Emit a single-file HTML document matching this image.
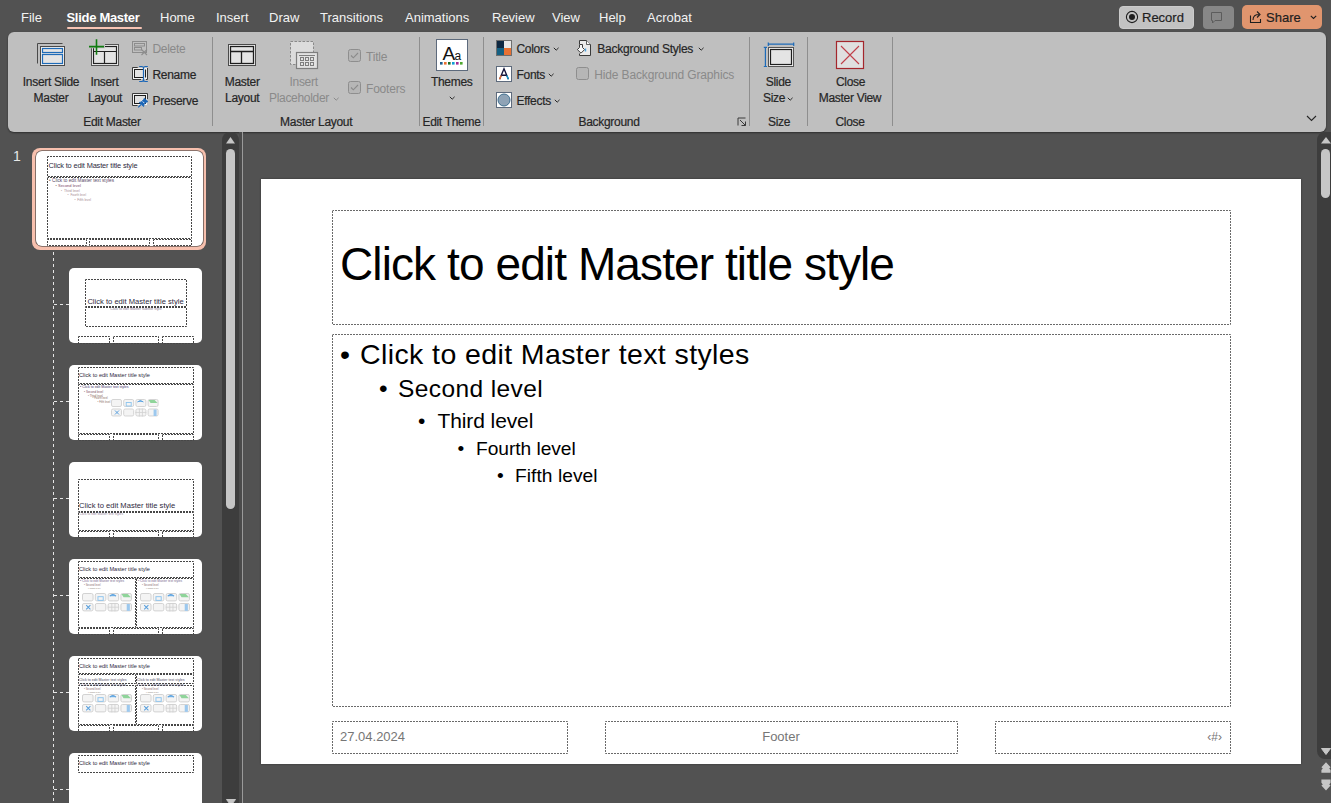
<!DOCTYPE html><html><head><meta charset="utf-8"><style>
html,body{margin:0;padding:0;}
body{width:1331px;height:803px;overflow:hidden;position:relative;background:#525252;font-family:"Liberation Sans",sans-serif;}
.t{position:absolute;white-space:nowrap;line-height:1;}
.u{-webkit-text-stroke:0.2px currentColor;}
svg{overflow:visible}
</style></head><body>
<div class="t" style="left:21px;top:10.90px;font-size:13px;color:#f2f2f2;">File</div>
<div class="t" style="left:66.5px;top:10.90px;font-size:13px;color:#ffffff;font-weight:700;letter-spacing:-0.3px;">Slide Master</div>
<div class="t" style="left:160px;top:10.90px;font-size:13px;color:#f2f2f2;">Home</div>
<div class="t" style="left:216px;top:10.90px;font-size:13px;color:#f2f2f2;">Insert</div>
<div class="t" style="left:269px;top:10.90px;font-size:13px;color:#f2f2f2;">Draw</div>
<div class="t" style="left:320px;top:10.90px;font-size:13px;color:#f2f2f2;">Transitions</div>
<div class="t" style="left:405px;top:10.90px;font-size:13px;color:#f2f2f2;">Animations</div>
<div class="t" style="left:492px;top:10.90px;font-size:13px;color:#f2f2f2;">Review</div>
<div class="t" style="left:552px;top:10.90px;font-size:13px;color:#f2f2f2;">View</div>
<div class="t" style="left:599px;top:10.90px;font-size:13px;color:#f2f2f2;">Help</div>
<div class="t" style="left:647px;top:10.90px;font-size:13px;color:#f2f2f2;">Acrobat</div>
<div style="position:absolute;left:67px;top:27px;width:75px;height:2px;background:#f8c4b4;border-radius:1px;"></div>
<div style="position:absolute;left:1118.5px;top:5.5px;width:75px;height:23px;background:#c2c2c2;border-radius:4px;box-sizing:border-box;border:1px solid #cbcbcb;"></div>
<svg style="position:absolute;left:1125px;top:10px;" width="14" height="14" viewBox="0 0 14 14"><circle cx="7" cy="7" r="5.6" fill="none" stroke="#1e1e1e" stroke-width="1.1"/><circle cx="7" cy="7" r="3" fill="#1e1e1e"/></svg>
<div class="t u" style="left:1142px;top:10.70px;font-size:13px;color:#1e1e1e;">Record</div>
<div style="position:absolute;left:1202.5px;top:5.5px;width:31px;height:23px;background:#878787;border-radius:4px;"></div>
<svg style="position:absolute;left:1210px;top:11px;" width="14" height="12" viewBox="0 0 14 12"><path d="M1.5 1.5 H11.5 V9.5 H5 L2.5 12 V9.5 H1.5 Z" fill="none" stroke="#5c5c5c" stroke-width="1"/></svg>
<div style="position:absolute;left:1242px;top:5px;width:80px;height:24px;background:#e0956e;border-radius:5px;"></div>
<svg style="position:absolute;left:1249px;top:10px;" width="14" height="14" viewBox="0 0 14 14"><path d="M1.5 5.5 V12.5 H11.5 V9" fill="none" stroke="#1e1e1e" stroke-width="1.1"/><path d="M4 10 C4 6 6.5 4.5 10 4.5 M8 1.5 L11 4.5 L8 7.5" fill="none" stroke="#1e1e1e" stroke-width="1.1"/></svg>
<div class="t u" style="left:1266px;top:10.60px;font-size:13px;color:#1e1e1e;">Share</div>
<svg style="position:absolute;left:1310px;top:15px;" width="7" height="5" viewBox="0 0 7 5"><path d="M0.8 0.8 L3.5 3.5 L6.2 0.8" fill="none" stroke="#1e1e1e" stroke-width="1.1"/></svg>
<div style="position:absolute;left:8px;top:32px;width:1318px;height:100px;background:#bfbfbf;border-radius:6px;box-shadow:0 1px 2px rgba(0,0,0,0.45);"></div>
<div style="position:absolute;left:212px;top:37px;width:1px;height:89px;background:#8e8e8e;"></div>
<div style="position:absolute;left:419px;top:37px;width:1px;height:89px;background:#8e8e8e;"></div>
<div style="position:absolute;left:483px;top:37px;width:1px;height:89px;background:#8e8e8e;"></div>
<div style="position:absolute;left:749px;top:37px;width:1px;height:89px;background:#8e8e8e;"></div>
<div style="position:absolute;left:807px;top:37px;width:1px;height:89px;background:#8e8e8e;"></div>
<div style="position:absolute;left:892px;top:37px;width:1px;height:89px;background:#8e8e8e;"></div>
<svg style="position:absolute;left:36px;top:42px;" width="30" height="26" viewBox="0 0 30 26">
<path d="M1.5 21.5 V1.5 H26.5" fill="none" stroke="#4a4a4a" stroke-width="1"/>
<rect x="4.5" y="4.5" width="24" height="19" fill="#f3f3f3" stroke="#4a4a4a" stroke-width="1"/>
<rect x="6" y="6" width="21" height="16" fill="#e4e4e4"/>
<rect x="6.5" y="6.5" width="20" height="4" fill="#e4e4e4" stroke="#1e6bb8" stroke-width="1.2"/>
<rect x="6.5" y="12.5" width="20" height="9" fill="#e4e4e4" stroke="#1e6bb8" stroke-width="1.2"/>
</svg>
<div class="t u" style="left:-149px;width:400px;text-align:center;top:75.74px;font-size:12px;color:#262626;letter-spacing:-0.3px;">Insert Slide</div>
<div class="t u" style="left:-149px;width:400px;text-align:center;top:91.64px;font-size:12px;color:#262626;letter-spacing:-0.3px;">Master</div>
<svg style="position:absolute;left:88px;top:38px;" width="32" height="30" viewBox="0 0 32 30">
<rect x="3.5" y="6.5" width="27" height="21" fill="#f3f3f3" stroke="#555" stroke-width="1"/>
<rect x="5.5" y="8.5" width="23" height="17" fill="#e4e4e4" stroke="#222" stroke-width="1.2"/>
<path d="M5.5 13.5 H28.5 M16.5 13.5 V25.5" stroke="#222" stroke-width="1.2"/>
<rect x="0" y="0" width="17" height="10.3" fill="#bfbfbf"/>
<path d="M1 8.6 H16 M8.5 1.2 V16.8" stroke="#107c10" stroke-width="1.6"/>
</svg>
<div class="t u" style="left:-95.5px;width:400px;text-align:center;top:75.74px;font-size:12px;color:#262626;letter-spacing:-0.3px;">Insert</div>
<div class="t u" style="left:-95px;width:400px;text-align:center;top:91.64px;font-size:12px;color:#262626;letter-spacing:-0.3px;">Layout</div>
<svg style="position:absolute;left:131px;top:40px;" width="18" height="16" viewBox="0 0 18 16">
<rect x="1.5" y="1.5" width="14" height="11" fill="none" stroke="#8d8d8d" stroke-width="1"/>
<rect x="3.5" y="3.5" width="10" height="2.5" fill="none" stroke="#8d8d8d" stroke-width="1"/>
<rect x="3.5" y="7.5" width="7" height="2.5" fill="none" stroke="#8d8d8d" stroke-width="1"/>
<path d="M10.5 9.5 L16 15 M16 9.5 L10.5 15" stroke="#8d8d8d" stroke-width="1.1"/>
</svg>
<div class="t" style="left:152.5px;top:42.64px;font-size:12px;color:#8a8a8a;letter-spacing:-0.3px;">Delete</div>
<svg style="position:absolute;left:130px;top:63px;" width="20" height="20" viewBox="0 0 20 20">
<rect x="3" y="5" width="14" height="11" fill="#f2f2f2"/>
<path d="M7.7 4.5 H2.5 V16.5 H11" fill="none" stroke="#3a3a3a" stroke-width="1"/>
<path d="M17.5 5 V16.5 H16" fill="none" stroke="#3a3a3a" stroke-width="1"/>
<rect x="4.5" y="6.5" width="9" height="8" fill="#e2e2e2" stroke="#1e1e1e" stroke-width="1"/>
<path d="M15.5 6.5 V14.5" stroke="#1e1e1e" stroke-width="1.1"/>
<path d="M9.2 3.5 H12 Q13.5 3.5 13.5 5.5 V16.5 Q13.5 18.5 12 18.5 H9.2 M17.8 3.5 H15 Q13.5 3.5 13.5 5.5 M13.5 16.5 Q13.5 18.5 15 18.5 H17.8" fill="none" stroke="#1a66b8" stroke-width="1.2"/>
</svg>
<div class="t u" style="left:152.5px;top:68.64px;font-size:12px;color:#262626;letter-spacing:-0.3px;">Rename</div>
<svg style="position:absolute;left:130px;top:91px;" width="20" height="20" viewBox="0 0 20 20">
<rect x="3" y="3" width="14" height="11" fill="#f2f2f2"/>
<path d="M7.5 14.5 H2.5 V2.5 H17.5 V8" fill="none" stroke="#3a3a3a" stroke-width="1"/>
<rect x="4.5" y="4.5" width="11" height="8" fill="#e2e2e2" stroke="#1e1e1e" stroke-width="1"/>
<path d="M14.3 7.2 L17.9 10.6 L16.3 11.2 L14 13.6 L13.6 15.6 L9.2 11.4 L11.2 11 L13.6 8.6 Z" fill="#1a66b8" stroke="#1a66b8" stroke-width="0.8" stroke-linejoin="round"/>
<path d="M12.6 10.4 L14.4 12.2" stroke="#e8f0fa" stroke-width="0.9"/>
<path d="M11 13.5 L8.2 16.4" stroke="#1a66b8" stroke-width="1.3"/>
</svg>
<div class="t u" style="left:152.5px;top:94.54px;font-size:12px;color:#262626;letter-spacing:-0.3px;">Preserve</div>
<div class="t u" style="left:-88px;width:400px;text-align:center;top:115.54px;font-size:12px;color:#262626;letter-spacing:-0.3px;">Edit Master</div>
<svg style="position:absolute;left:227px;top:43px;" width="30" height="24" viewBox="0 0 30 24">
<rect x="1.5" y="1.5" width="27" height="21" fill="#f5f5f5" stroke="#4a4a4a" stroke-width="1"/>
<rect x="3.5" y="3.5" width="23" height="17" fill="#e4e4e4" stroke="#1e1e1e" stroke-width="1.3"/>
<path d="M3.5 8.5 H26.5 M14.5 8.5 V20.5" stroke="#1e1e1e" stroke-width="1.3"/>
</svg>
<div class="t u" style="left:42.19999999999999px;width:400px;text-align:center;top:75.74px;font-size:12px;color:#262626;letter-spacing:-0.3px;">Master</div>
<div class="t u" style="left:42.19999999999999px;width:400px;text-align:center;top:91.64px;font-size:12px;color:#262626;letter-spacing:-0.3px;">Layout</div>
<svg style="position:absolute;left:289px;top:40px;" width="31" height="31" viewBox="0 0 31 31">
<rect x="1.5" y="1.5" width="23" height="23" fill="#dcdcdc" stroke="#8a8a8a" stroke-width="1" stroke-dasharray="2.5 1.5"/>
<rect x="7.5" y="12.5" width="21" height="16" fill="#e2e2e2" stroke="#7e7e7e" stroke-width="1.2"/>
<path d="M10 15.5 H26" stroke="#7e7e7e" stroke-width="1"/>
<g fill="none" stroke="#7e7e7e" stroke-width="1">
<rect x="11.5" y="17.5" width="3" height="3"/><rect x="16.5" y="17.5" width="3" height="3"/><rect x="21.5" y="17.5" width="3" height="3"/>
<rect x="11.5" y="22.5" width="3" height="3"/><rect x="16.5" y="22.5" width="3" height="3"/><rect x="21.5" y="22.5" width="3" height="3"/>
</g>
</svg>
<div class="t" style="left:103.60000000000002px;width:400px;text-align:center;top:75.74px;font-size:12px;color:#8a8a8a;letter-spacing:-0.3px;">Insert</div>
<div class="t" style="left:99px;width:400px;text-align:center;top:91.64px;font-size:12px;color:#8a8a8a;letter-spacing:-0.3px;">Placeholder</div>
<svg style="position:absolute;left:332.5px;top:97px;" width="7" height="5" viewBox="0 0 7 5"><path d="M0.8 0.8 L3.2 3.2 L5.6 0.8" fill="none" stroke="#8a8a8a" stroke-width="1"/></svg>
<svg style="position:absolute;left:348px;top:49px;" width="13" height="13" viewBox="0 0 13 13"><rect x="0.5" y="0.5" width="12" height="12" rx="2" fill="#b6b6b6" stroke="#8e8e8e" stroke-width="1"/><path d="M3 6.5 L5.3 8.8 L10 4" fill="none" stroke="#8a8a8a" stroke-width="1.1"/></svg>
<div class="t" style="left:366px;top:50.74px;font-size:12px;color:#8a8a8a;letter-spacing:-0.2px;">Title</div>
<svg style="position:absolute;left:348px;top:81px;" width="13" height="13" viewBox="0 0 13 13"><rect x="0.5" y="0.5" width="12" height="12" rx="2" fill="#b6b6b6" stroke="#8e8e8e" stroke-width="1"/><path d="M3 6.5 L5.3 8.8 L10 4" fill="none" stroke="#8a8a8a" stroke-width="1.1"/></svg>
<div class="t" style="left:366px;top:82.64px;font-size:12px;color:#8a8a8a;letter-spacing:-0.2px;">Footers</div>
<div class="t u" style="left:116.19999999999999px;width:400px;text-align:center;top:115.54px;font-size:12px;color:#262626;letter-spacing:-0.3px;">Master Layout</div>
<svg style="position:absolute;left:436px;top:39px;" width="32" height="32" viewBox="0 0 32 32">
<rect x="0.5" y="0.5" width="31" height="31" fill="#ffffff" stroke="#5d6a7c" stroke-width="1"/>
<text x="6.5" y="20.5" font-family="Liberation Sans" font-size="19" fill="#111">A</text>
<text x="18.5" y="20.5" font-family="Liberation Sans" font-size="12" fill="#111">a</text>
<rect x="4" y="23" width="2.6" height="2.6" fill="#1f5c8c"/>
<rect x="8" y="23" width="2.6" height="2.6" fill="#e97132"/>
<rect x="12" y="23" width="2.6" height="2.6" fill="#196b24"/>
<rect x="16" y="23" width="2.6" height="2.6" fill="#0f9ed5"/>
<rect x="20" y="23" width="2.6" height="2.6" fill="#a02b93"/>
<rect x="24" y="23" width="2.6" height="2.6" fill="#4ea72e"/>
</svg>
<div class="t u" style="left:251.7px;width:400px;text-align:center;top:75.74px;font-size:12px;color:#262626;letter-spacing:-0.3px;">Themes</div>
<svg style="position:absolute;left:448.5px;top:95.5px;" width="7" height="5" viewBox="0 0 7 5"><path d="M0.8 0.8 L3.2 3.2 L5.6 0.8" fill="none" stroke="#262626" stroke-width="1"/></svg>
<div class="t u" style="left:251.5px;width:400px;text-align:center;top:115.54px;font-size:12px;color:#262626;letter-spacing:-0.3px;">Edit Theme</div>
<svg style="position:absolute;left:496px;top:40px;" width="16" height="16" viewBox="0 0 16 16">
<rect x="0.5" y="0.5" width="15" height="15" fill="none" stroke="#6e6e6e" stroke-width="1"/>
<rect x="1" y="1" width="7" height="7" fill="#0e2841"/>
<rect x="8" y="1" width="7" height="7" fill="#e8e8e8"/>
<rect x="1" y="8" width="7" height="7" fill="#156082"/>
<rect x="8" y="8" width="7" height="7" fill="#e97132"/>
</svg>
<div class="t u" style="left:516.5px;top:42.64px;font-size:12px;color:#262626;letter-spacing:-0.3px;">Colors</div>
<svg style="position:absolute;left:552.5px;top:46.5px;" width="7" height="5" viewBox="0 0 7 5"><path d="M0.8 0.8 L3.2 3.2 L5.6 0.8" fill="none" stroke="#262626" stroke-width="1"/></svg>
<svg style="position:absolute;left:496px;top:66px;" width="16" height="16" viewBox="0 0 16 16">
<rect x="0.5" y="0.5" width="15" height="15" fill="#fff" stroke="#5d6a7c" stroke-width="1"/>
<path d="M3.6 13.2 L8 2.8 L12.4 13.2 M5.4 9.2 H10.6" fill="none" stroke="#14143a" stroke-width="1.35"/>
<path d="M3.6 13.2 L5.2 9.4" stroke="#e97132" stroke-width="1.35"/>
<path d="M10.8 9.4 L12.4 13.2" stroke="#0f9ed5" stroke-width="1.35"/>
</svg>
<div class="t u" style="left:516.5px;top:68.64px;font-size:12px;color:#262626;letter-spacing:-0.3px;">Fonts</div>
<svg style="position:absolute;left:547.5px;top:72.5px;" width="7" height="5" viewBox="0 0 7 5"><path d="M0.8 0.8 L3.2 3.2 L5.6 0.8" fill="none" stroke="#262626" stroke-width="1"/></svg>
<svg style="position:absolute;left:496px;top:92px;" width="16" height="16" viewBox="0 0 16 16">
<rect x="0.5" y="0.5" width="15" height="15" fill="#fff" stroke="#5d6a7c" stroke-width="1"/>
<circle cx="8" cy="8" r="6" fill="#8fa3b6" stroke="#3e6e8e" stroke-width="1"/>
</svg>
<div class="t u" style="left:516.5px;top:94.54px;font-size:12px;color:#262626;letter-spacing:-0.3px;">Effects</div>
<svg style="position:absolute;left:553.5px;top:98.5px;" width="7" height="5" viewBox="0 0 7 5"><path d="M0.8 0.8 L3.2 3.2 L5.6 0.8" fill="none" stroke="#262626" stroke-width="1"/></svg>
<svg style="position:absolute;left:576px;top:39px;" width="17" height="18" viewBox="0 0 17 18">
<path d="M3.5 1.5 H10.5 L14.5 5.5 V16.5 H3.5 Z" fill="#ebebeb" stroke="none"/>
<path d="M3.5 5 V1.5 H10.5 L14.5 5.5 V16.5 H3.5 V14.5" fill="none" stroke="#3a3a3a" stroke-width="1"/>
<path d="M10.5 1.5 V5.5 H14.5" fill="#fafafa" stroke="#3a3a3a" stroke-width="0.8"/>
<path d="M3.5 5.5 H6.5 V8.5 L8.6 10.6 L5 14.2 L1.4 10.6 L3.5 8.5 Z" fill="#f8f8f8" stroke="#3a3a3a" stroke-width="1" stroke-linejoin="round"/>
<path d="M9.5 9.5 V12.5" stroke="#4aa3e0" stroke-width="1.4"/>
</svg>
<div class="t u" style="left:597.3px;top:42.64px;font-size:12px;color:#262626;letter-spacing:-0.25px;">Background Styles</div>
<svg style="position:absolute;left:697.5px;top:46.5px;" width="7" height="5" viewBox="0 0 7 5"><path d="M0.8 0.8 L3.2 3.2 L5.6 0.8" fill="none" stroke="#262626" stroke-width="1"/></svg>
<svg style="position:absolute;left:576px;top:67px;" width="13" height="13" viewBox="0 0 13 13"><rect x="0.5" y="0.5" width="12" height="12" rx="2" fill="#b6b6b6" stroke="#8e8e8e" stroke-width="1"/></svg>
<div class="t" style="left:594.3px;top:68.64px;font-size:12px;color:#8a8a8a;letter-spacing:-0.15px;">Hide Background Graphics</div>
<div class="t u" style="left:409px;width:400px;text-align:center;top:115.54px;font-size:12px;color:#262626;letter-spacing:-0.3px;">Background</div>
<svg style="position:absolute;left:737px;top:117px;" width="10" height="10" viewBox="0 0 10 10"><path d="M1 8.5 V1 H8.5" fill="none" stroke="#3a3a3a" stroke-width="1"/><path d="M3 3 L8.5 8.5 M4.5 8.5 H8.5 V4.5" fill="none" stroke="#3a3a3a" stroke-width="1"/></svg>
<svg style="position:absolute;left:763px;top:42px;" width="32" height="26" viewBox="0 0 32 26">
<path d="M5.3 2.2 H30.7 M5.3 0.5 V4 M30.7 0.5 V4" stroke="#1e6bb8" stroke-width="1.2"/>
<path d="M2.4 5.3 V24.5 M0.8 5.3 H4 M0.8 24.5 H4" stroke="#1e6bb8" stroke-width="1.2"/>
<rect x="5.5" y="5.5" width="25" height="19" fill="#f5f5f5" stroke="#555" stroke-width="1"/>
<rect x="7.5" y="7.5" width="21" height="15" fill="#e4e4e4" stroke="#1e1e1e" stroke-width="1.2"/>
</svg>
<div class="t u" style="left:578.4px;width:400px;text-align:center;top:75.74px;font-size:12px;color:#262626;letter-spacing:-0.3px;">Slide</div>
<div class="t u" style="left:574px;width:400px;text-align:center;top:91.64px;font-size:12px;color:#262626;letter-spacing:-0.3px;">Size</div>
<svg style="position:absolute;left:786.5px;top:97px;" width="7" height="5" viewBox="0 0 7 5"><path d="M0.8 0.8 L3.2 3.2 L5.6 0.8" fill="none" stroke="#262626" stroke-width="1"/></svg>
<div class="t u" style="left:579px;width:400px;text-align:center;top:115.54px;font-size:12px;color:#262626;letter-spacing:-0.3px;">Size</div>
<svg style="position:absolute;left:836px;top:41px;" width="28" height="28" viewBox="0 0 28 28">
<rect x="0.5" y="0.5" width="27" height="27" fill="#e0e0e0" stroke="#a4262c" stroke-width="1.2"/>
<path d="M5 5 L23 23 M23 5 L5 23" stroke="#c0404a" stroke-width="1.1"/>
</svg>
<div class="t u" style="left:650.5px;width:400px;text-align:center;top:75.74px;font-size:12px;color:#262626;letter-spacing:-0.3px;">Close</div>
<div class="t u" style="left:650px;width:400px;text-align:center;top:91.64px;font-size:12px;color:#262626;letter-spacing:-0.3px;">Master View</div>
<div class="t u" style="left:650px;width:400px;text-align:center;top:115.54px;font-size:12px;color:#262626;letter-spacing:-0.3px;">Close</div>
<svg style="position:absolute;left:1306px;top:115px;" width="11" height="7" viewBox="0 0 11 7"><path d="M1 1 L5.5 5.5 L10 1" fill="none" stroke="#262626" stroke-width="1.1"/></svg>
<div class="t" style="left:13px;top:148.95px;font-size:14px;color:#e8e8e8;">1</div>
<div style="position:absolute;left:242px;top:132px;width:1px;height:671px;background:#9a9a9a;"></div>
<div style="position:absolute;left:239px;top:132px;width:3px;height:671px;background:#4b4b4b;"></div>
<div style="position:absolute;left:222px;top:132px;width:17px;height:671px;background:#3d3d3d;border-radius:8px 8px 0 0;"></div>
<svg style="position:absolute;left:226px;top:137px;" width="9" height="7" viewBox="0 0 9 7"><path d="M4.5 0 L9 6.5 H0 Z" fill="#c6c6c6"/></svg>
<div style="position:absolute;left:226px;top:148.5px;width:9px;height:360.5px;background:#c6c6c6;border-radius:4.5px;"></div>
<svg style="position:absolute;left:225.5px;top:799px;" width="10" height="7" viewBox="0 0 10 7"><path d="M0.5 0.5 H9.5 L5 6.5 Z" fill="#c6c6c6" stroke="#c6c6c6" stroke-width="1" stroke-linejoin="round"/></svg>
<div style="position:absolute;left:32px;top:147.7px;width:174px;height:102.1px;background:#f7c0ae;border-radius:8px;"></div>
<div style="position:absolute;left:35.5px;top:151.2px;width:167.4px;height:95.2px;background:#fff;border-radius:6px;box-shadow:0 0 0 0.8px #6a5a55;"></div>
<svg style="position:absolute;left:47px;top:156px;" width="145" height="21" viewBox="0 0 145 21"><rect x="0.5" y="0.5" width="144" height="20" fill="none" stroke="#474747" stroke-width="1" stroke-dasharray="2 1" stroke-dashoffset="0.5"/></svg>
<svg style="position:absolute;left:47px;top:177px;" width="145" height="62" viewBox="0 0 145 62"><rect x="0.5" y="0.5" width="144" height="61" fill="none" stroke="#474747" stroke-width="1" stroke-dasharray="2 1" stroke-dashoffset="0.5"/></svg>
<svg style="position:absolute;left:47px;top:239px;" width="40" height="7" viewBox="0 0 40 7"><rect x="0.5" y="0.5" width="39" height="6" fill="none" stroke="#474747" stroke-width="1" stroke-dasharray="2 1" stroke-dashoffset="0.5"/></svg>
<svg style="position:absolute;left:89px;top:239px;" width="61" height="7" viewBox="0 0 61 7"><rect x="0.5" y="0.5" width="60" height="6" fill="none" stroke="#474747" stroke-width="1" stroke-dasharray="2 1" stroke-dashoffset="0.5"/></svg>
<svg style="position:absolute;left:153px;top:239px;" width="39" height="7" viewBox="0 0 39 7"><rect x="0.5" y="0.5" width="38" height="6" fill="none" stroke="#474747" stroke-width="1" stroke-dasharray="2 1" stroke-dashoffset="0.5"/></svg>
<div class="t" style="left:48.5px;top:161.74px;font-size:7.4px;color:#2e2a40;letter-spacing:-0.15px;">Click to edit Master title style</div>
<div class="t" style="left:49px;top:179.19px;font-size:4.5px;color:#666;">•</div>
<div class="t" style="left:52px;top:179.02px;font-size:4.7px;color:#5a4a68;">Click to edit Master text styles</div>
<div class="t" style="left:55.5px;top:184.74px;font-size:3.5px;color:#866;">•</div>
<div class="t" style="left:58px;top:184.31px;font-size:4.0px;color:#7a4a6a;">Second level</div>
<div class="t" style="left:61px;top:190.16px;font-size:3px;color:#a88;">•</div>
<div class="t" style="left:64px;top:189.82px;font-size:3.4px;color:#a58a90;">Third level</div>
<div class="t" style="left:67.5px;top:194.26px;font-size:3px;color:#a88;">•</div>
<div class="t" style="left:70.4px;top:194.26px;font-size:3.0px;color:#a58a90;">Fourth level</div>
<div class="t" style="left:74.5px;top:199.06px;font-size:3px;color:#a88;">•</div>
<div class="t" style="left:77.3px;top:198.89px;font-size:3.2px;color:#a58a90;">Fifth level</div>
<svg style="position:absolute;left:53px;top:250px;" width="1" height="553" viewBox="0 0 1 553"><path d="M0.5 2 V553" stroke="#e6e6e6" stroke-width="1" stroke-dasharray="3 3"/></svg>
<div style="position:absolute;left:69px;top:268px;width:133px;height:75px;background:#fff;border-radius:5px;"></div>
<svg style="position:absolute;left:54px;top:304px;" width="15" height="1" viewBox="0 0 15 1"><path d="M0 0.5 H15" stroke="#e6e6e6" stroke-width="1" stroke-dasharray="3 3"/></svg>
<div style="position:absolute;left:69px;top:365px;width:133px;height:75px;background:#fff;border-radius:5px;"></div>
<svg style="position:absolute;left:54px;top:401px;" width="15" height="1" viewBox="0 0 15 1"><path d="M0 0.5 H15" stroke="#e6e6e6" stroke-width="1" stroke-dasharray="3 3"/></svg>
<div style="position:absolute;left:69px;top:462px;width:133px;height:75px;background:#fff;border-radius:5px;"></div>
<svg style="position:absolute;left:54px;top:498px;" width="15" height="1" viewBox="0 0 15 1"><path d="M0 0.5 H15" stroke="#e6e6e6" stroke-width="1" stroke-dasharray="3 3"/></svg>
<div style="position:absolute;left:69px;top:559px;width:133px;height:75px;background:#fff;border-radius:5px;"></div>
<svg style="position:absolute;left:54px;top:595px;" width="15" height="1" viewBox="0 0 15 1"><path d="M0 0.5 H15" stroke="#e6e6e6" stroke-width="1" stroke-dasharray="3 3"/></svg>
<div style="position:absolute;left:69px;top:656px;width:133px;height:75px;background:#fff;border-radius:5px;"></div>
<svg style="position:absolute;left:54px;top:692px;" width="15" height="1" viewBox="0 0 15 1"><path d="M0 0.5 H15" stroke="#e6e6e6" stroke-width="1" stroke-dasharray="3 3"/></svg>
<div style="position:absolute;left:69px;top:753px;width:133px;height:75px;background:#fff;border-radius:5px;"></div>
<svg style="position:absolute;left:54px;top:789px;" width="15" height="1" viewBox="0 0 15 1"><path d="M0 0.5 H15" stroke="#e6e6e6" stroke-width="1" stroke-dasharray="3 3"/></svg>
<svg style="position:absolute;left:85px;top:279px;" width="102" height="28" viewBox="0 0 102 28"><rect x="0.5" y="0.5" width="101" height="27" fill="none" stroke="#474747" stroke-width="1" stroke-dasharray="2 1" stroke-dashoffset="0.5"/></svg>
<svg style="position:absolute;left:85px;top:307px;" width="102" height="20" viewBox="0 0 102 20"><rect x="0.5" y="0.5" width="101" height="19" fill="none" stroke="#474747" stroke-width="1" stroke-dasharray="2 1" stroke-dashoffset="0.5"/></svg>
<svg style="position:absolute;left:78px;top:336px;" width="32" height="8" viewBox="0 0 32 8"><rect x="0.5" y="0.5" width="31" height="7" fill="none" stroke="#474747" stroke-width="1" stroke-dasharray="2 1" stroke-dashoffset="0.5"/></svg>
<svg style="position:absolute;left:113px;top:336px;" width="46" height="8" viewBox="0 0 46 8"><rect x="0.5" y="0.5" width="45" height="7" fill="none" stroke="#474747" stroke-width="1" stroke-dasharray="2 1" stroke-dashoffset="0.5"/></svg>
<svg style="position:absolute;left:162px;top:336px;" width="32" height="8" viewBox="0 0 32 8"><rect x="0.5" y="0.5" width="31" height="7" fill="none" stroke="#474747" stroke-width="1" stroke-dasharray="2 1" stroke-dashoffset="0.5"/></svg>
<div class="t" style="left:-64.5px;width:400px;text-align:center;top:297.57px;font-size:7.6px;color:#2e2a40;">Click to edit Master title style</div>
<div class="t" style="left:-64px;width:400px;text-align:center;top:307.95px;font-size:3.6px;color:#8a7a90;">Click to edit Master subtitle style</div>
<svg style="position:absolute;left:78px;top:367px;" width="116" height="17" viewBox="0 0 116 17"><rect x="0.5" y="0.5" width="115" height="16" fill="none" stroke="#474747" stroke-width="1" stroke-dasharray="2 1" stroke-dashoffset="0.5"/></svg>
<svg style="position:absolute;left:78px;top:384px;" width="116" height="50" viewBox="0 0 116 50"><rect x="0.5" y="0.5" width="115" height="49" fill="none" stroke="#474747" stroke-width="1" stroke-dasharray="2 1" stroke-dashoffset="0.5"/></svg>
<svg style="position:absolute;left:78px;top:434px;" width="32" height="7" viewBox="0 0 32 7"><rect x="0.5" y="0.5" width="31" height="6" fill="none" stroke="#474747" stroke-width="1" stroke-dasharray="2 1" stroke-dashoffset="0.5"/></svg>
<svg style="position:absolute;left:113px;top:434px;" width="46" height="7" viewBox="0 0 46 7"><rect x="0.5" y="0.5" width="45" height="6" fill="none" stroke="#474747" stroke-width="1" stroke-dasharray="2 1" stroke-dashoffset="0.5"/></svg>
<svg style="position:absolute;left:162px;top:434px;" width="32" height="7" viewBox="0 0 32 7"><rect x="0.5" y="0.5" width="31" height="6" fill="none" stroke="#474747" stroke-width="1" stroke-dasharray="2 1" stroke-dashoffset="0.5"/></svg>
<div class="t" style="left:79px;top:373.16px;font-size:5.6px;color:#2e2a40;">Click to edit Master title style</div>
<div class="t" style="left:80px;top:386.04px;font-size:3.5px;color:#4a3a70;">• Click to edit Master text styles</div>
<div class="t" style="left:84px;top:391.46px;font-size:3px;color:#7a4a5a;">• Second level</div>
<div class="t" style="left:88px;top:394.63px;font-size:2.8px;color:#8a6a60;">• Third level</div>
<div class="t" style="left:92.5px;top:398.40px;font-size:2.6px;color:#8a6a60;">• Fourth level</div>
<div class="t" style="left:97.5px;top:401.50px;font-size:2.6px;color:#8a6a60;">• Fifth level</div>
<svg style="position:absolute;left:111.2px;top:399.25px;" width="47.6" height="17.5" viewBox="0 0 47.6 17.5"><rect x="0.50" y="0.50" width="10.00" height="7.00" rx="1.50" fill="#f4f4f4" stroke="#d0d0d0" stroke-width="0.90"/><rect x="12.70" y="0.50" width="10.00" height="7.00" rx="1.50" fill="#f4f4f4" stroke="#d0d0d0" stroke-width="0.90"/><rect x="24.90" y="0.50" width="10.00" height="7.00" rx="1.50" fill="#f4f4f4" stroke="#d0d0d0" stroke-width="0.90"/><rect x="37.10" y="0.50" width="10.00" height="7.00" rx="1.50" fill="#f4f4f4" stroke="#d0d0d0" stroke-width="0.90"/><rect x="0.50" y="10.00" width="10.00" height="7.00" rx="1.50" fill="#f4f4f4" stroke="#d0d0d0" stroke-width="0.90"/><rect x="12.70" y="10.00" width="10.00" height="7.00" rx="1.50" fill="#f4f4f4" stroke="#d0d0d0" stroke-width="0.90"/><rect x="24.90" y="10.00" width="10.00" height="7.00" rx="1.50" fill="#f4f4f4" stroke="#d0d0d0" stroke-width="0.90"/><rect x="37.10" y="10.00" width="10.00" height="7.00" rx="1.50" fill="#f4f4f4" stroke="#d0d0d0" stroke-width="0.90"/><path d="M26.40 3.00 q3.00 -3.00 6.00 0" fill="#7ab8ea" stroke="#5aa0dd" stroke-width="1.00"/><path d="M37.60 1.00 h6.00 l3.00 3.00 h-7.00 z" fill="#8fd49a"/><rect x="15.20" y="3.50" width="5.00" height="3.50" fill="none" stroke="#8cc4ee" stroke-width="0.90"/><path d="M4.00 15.50 l4.00 -4.00 M4.00 11.50 l4.00 4.00" stroke="#5aa0dd" stroke-width="1.00"/><rect x="42.60" y="10.50" width="3.00" height="6.50" fill="#9cc8ee"/><path d="M28.40 9.5 v8.00 M31.40 9.5 v8.00 M24.4 13.50 h11.00" stroke="#d0d0d0" stroke-width="0.80"/></svg>
<svg style="position:absolute;left:78px;top:479px;" width="116" height="33" viewBox="0 0 116 33"><rect x="0.5" y="0.5" width="115" height="32" fill="none" stroke="#474747" stroke-width="1" stroke-dasharray="2 1" stroke-dashoffset="0.5"/></svg>
<svg style="position:absolute;left:78px;top:512px;" width="116" height="19" viewBox="0 0 116 19"><rect x="0.5" y="0.5" width="115" height="18" fill="none" stroke="#474747" stroke-width="1" stroke-dasharray="2 1" stroke-dashoffset="0.5"/></svg>
<svg style="position:absolute;left:78px;top:531px;" width="32" height="7" viewBox="0 0 32 7"><rect x="0.5" y="0.5" width="31" height="6" fill="none" stroke="#474747" stroke-width="1" stroke-dasharray="2 1" stroke-dashoffset="0.5"/></svg>
<svg style="position:absolute;left:113px;top:531px;" width="46" height="7" viewBox="0 0 46 7"><rect x="0.5" y="0.5" width="45" height="6" fill="none" stroke="#474747" stroke-width="1" stroke-dasharray="2 1" stroke-dashoffset="0.5"/></svg>
<svg style="position:absolute;left:162px;top:531px;" width="32" height="7" viewBox="0 0 32 7"><rect x="0.5" y="0.5" width="31" height="6" fill="none" stroke="#474747" stroke-width="1" stroke-dasharray="2 1" stroke-dashoffset="0.5"/></svg>
<div class="t" style="left:79px;top:502.17px;font-size:7.6px;color:#2e2a40;">Click to edit Master title style</div>
<div class="t" style="left:79.5px;top:513.21px;font-size:3.3px;color:#9a8aa0;">Click to edit Master text styles</div>
<svg style="position:absolute;left:78px;top:561px;" width="116" height="17" viewBox="0 0 116 17"><rect x="0.5" y="0.5" width="115" height="16" fill="none" stroke="#474747" stroke-width="1" stroke-dasharray="2 1" stroke-dashoffset="0.5"/></svg>
<svg style="position:absolute;left:78px;top:578px;" width="58" height="50" viewBox="0 0 58 50"><rect x="0.5" y="0.5" width="57" height="49" fill="none" stroke="#474747" stroke-width="1" stroke-dasharray="2 1" stroke-dashoffset="0.5"/></svg>
<svg style="position:absolute;left:136px;top:578px;" width="58" height="50" viewBox="0 0 58 50"><rect x="0.5" y="0.5" width="57" height="49" fill="none" stroke="#474747" stroke-width="1" stroke-dasharray="2 1" stroke-dashoffset="0.5"/></svg>
<svg style="position:absolute;left:78px;top:628px;" width="32" height="7" viewBox="0 0 32 7"><rect x="0.5" y="0.5" width="31" height="6" fill="none" stroke="#474747" stroke-width="1" stroke-dasharray="2 1" stroke-dashoffset="0.5"/></svg>
<svg style="position:absolute;left:113px;top:628px;" width="46" height="7" viewBox="0 0 46 7"><rect x="0.5" y="0.5" width="45" height="6" fill="none" stroke="#474747" stroke-width="1" stroke-dasharray="2 1" stroke-dashoffset="0.5"/></svg>
<svg style="position:absolute;left:162px;top:628px;" width="32" height="7" viewBox="0 0 32 7"><rect x="0.5" y="0.5" width="31" height="6" fill="none" stroke="#474747" stroke-width="1" stroke-dasharray="2 1" stroke-dashoffset="0.5"/></svg>
<div class="t" style="left:79px;top:567.06px;font-size:5.6px;color:#2e2a40;">Click to edit Master title style</div>
<div class="t" style="left:80px;top:579.79px;font-size:3.2px;color:#7a6a90;">• Click to edit Master text styles</div>
<div class="t" style="left:84px;top:585.30px;font-size:2.6px;color:#8a6a70;">• Second level</div>
<div class="t" style="left:88px;top:588.47px;font-size:2.4px;color:#8a7a70;">• Third level</div>
<svg style="position:absolute;left:81.51px;top:593.31px;" width="49.98" height="18.38" viewBox="0 0 49.98 18.38"><rect x="0.50" y="0.50" width="10.55" height="7.40" rx="1.58" fill="#f4f4f4" stroke="#d0d0d0" stroke-width="0.95"/><rect x="13.31" y="0.50" width="10.55" height="7.40" rx="1.58" fill="#f4f4f4" stroke="#d0d0d0" stroke-width="0.95"/><rect x="26.12" y="0.50" width="10.55" height="7.40" rx="1.58" fill="#f4f4f4" stroke="#d0d0d0" stroke-width="0.95"/><rect x="38.93" y="0.50" width="10.55" height="7.40" rx="1.58" fill="#f4f4f4" stroke="#d0d0d0" stroke-width="0.95"/><rect x="0.50" y="10.48" width="10.55" height="7.40" rx="1.58" fill="#f4f4f4" stroke="#d0d0d0" stroke-width="0.95"/><rect x="13.31" y="10.48" width="10.55" height="7.40" rx="1.58" fill="#f4f4f4" stroke="#d0d0d0" stroke-width="0.95"/><rect x="26.12" y="10.48" width="10.55" height="7.40" rx="1.58" fill="#f4f4f4" stroke="#d0d0d0" stroke-width="0.95"/><rect x="38.93" y="10.48" width="10.55" height="7.40" rx="1.58" fill="#f4f4f4" stroke="#d0d0d0" stroke-width="0.95"/><path d="M27.72 3.15 q3.15 -3.15 6.30 0" fill="#7ab8ea" stroke="#5aa0dd" stroke-width="1.05"/><path d="M39.48 1.05 h6.30 l3.15 3.15 h-7.35 z" fill="#8fd49a"/><rect x="15.96" y="3.68" width="5.25" height="3.68" fill="none" stroke="#8cc4ee" stroke-width="0.95"/><path d="M4.20 16.28 l4.20 -4.20 M4.20 12.08 l4.20 4.20" stroke="#5aa0dd" stroke-width="1.05"/><rect x="44.73" y="11.03" width="3.15" height="6.83" fill="#9cc8ee"/><path d="M29.82 9.975000000000001 v8.40 M32.97 9.975000000000001 v8.40 M25.62 14.18 h11.55" stroke="#d0d0d0" stroke-width="0.84"/></svg>
<div class="t" style="left:138px;top:579.79px;font-size:3.2px;color:#7a6a90;">• Click to edit Master text styles</div>
<div class="t" style="left:142px;top:585.30px;font-size:2.6px;color:#8a6a70;">• Second level</div>
<div class="t" style="left:146px;top:588.47px;font-size:2.4px;color:#8a7a70;">• Third level</div>
<svg style="position:absolute;left:139.51px;top:593.31px;" width="49.98" height="18.38" viewBox="0 0 49.98 18.38"><rect x="0.50" y="0.50" width="10.55" height="7.40" rx="1.58" fill="#f4f4f4" stroke="#d0d0d0" stroke-width="0.95"/><rect x="13.31" y="0.50" width="10.55" height="7.40" rx="1.58" fill="#f4f4f4" stroke="#d0d0d0" stroke-width="0.95"/><rect x="26.12" y="0.50" width="10.55" height="7.40" rx="1.58" fill="#f4f4f4" stroke="#d0d0d0" stroke-width="0.95"/><rect x="38.93" y="0.50" width="10.55" height="7.40" rx="1.58" fill="#f4f4f4" stroke="#d0d0d0" stroke-width="0.95"/><rect x="0.50" y="10.48" width="10.55" height="7.40" rx="1.58" fill="#f4f4f4" stroke="#d0d0d0" stroke-width="0.95"/><rect x="13.31" y="10.48" width="10.55" height="7.40" rx="1.58" fill="#f4f4f4" stroke="#d0d0d0" stroke-width="0.95"/><rect x="26.12" y="10.48" width="10.55" height="7.40" rx="1.58" fill="#f4f4f4" stroke="#d0d0d0" stroke-width="0.95"/><rect x="38.93" y="10.48" width="10.55" height="7.40" rx="1.58" fill="#f4f4f4" stroke="#d0d0d0" stroke-width="0.95"/><path d="M27.72 3.15 q3.15 -3.15 6.30 0" fill="#7ab8ea" stroke="#5aa0dd" stroke-width="1.05"/><path d="M39.48 1.05 h6.30 l3.15 3.15 h-7.35 z" fill="#8fd49a"/><rect x="15.96" y="3.68" width="5.25" height="3.68" fill="none" stroke="#8cc4ee" stroke-width="0.95"/><path d="M4.20 16.28 l4.20 -4.20 M4.20 12.08 l4.20 4.20" stroke="#5aa0dd" stroke-width="1.05"/><rect x="44.73" y="11.03" width="3.15" height="6.83" fill="#9cc8ee"/><path d="M29.82 9.975000000000001 v8.40 M32.97 9.975000000000001 v8.40 M25.62 14.18 h11.55" stroke="#d0d0d0" stroke-width="0.84"/></svg>
<svg style="position:absolute;left:78px;top:658px;" width="116" height="16" viewBox="0 0 116 16"><rect x="0.5" y="0.5" width="115" height="15" fill="none" stroke="#474747" stroke-width="1" stroke-dasharray="2 1" stroke-dashoffset="0.5"/></svg>
<svg style="position:absolute;left:78px;top:674px;" width="58" height="10" viewBox="0 0 58 10"><rect x="0.5" y="0.5" width="57" height="9" fill="none" stroke="#474747" stroke-width="1" stroke-dasharray="2 1" stroke-dashoffset="0.5"/></svg>
<svg style="position:absolute;left:136px;top:674px;" width="58" height="10" viewBox="0 0 58 10"><rect x="0.5" y="0.5" width="57" height="9" fill="none" stroke="#474747" stroke-width="1" stroke-dasharray="2 1" stroke-dashoffset="0.5"/></svg>
<svg style="position:absolute;left:78px;top:685px;" width="58" height="40" viewBox="0 0 58 40"><rect x="0.5" y="0.5" width="57" height="39" fill="none" stroke="#474747" stroke-width="1" stroke-dasharray="2 1" stroke-dashoffset="0.5"/></svg>
<svg style="position:absolute;left:136px;top:685px;" width="58" height="40" viewBox="0 0 58 40"><rect x="0.5" y="0.5" width="57" height="39" fill="none" stroke="#474747" stroke-width="1" stroke-dasharray="2 1" stroke-dashoffset="0.5"/></svg>
<svg style="position:absolute;left:78px;top:725px;" width="32" height="7" viewBox="0 0 32 7"><rect x="0.5" y="0.5" width="31" height="6" fill="none" stroke="#474747" stroke-width="1" stroke-dasharray="2 1" stroke-dashoffset="0.5"/></svg>
<svg style="position:absolute;left:113px;top:725px;" width="46" height="7" viewBox="0 0 46 7"><rect x="0.5" y="0.5" width="45" height="6" fill="none" stroke="#474747" stroke-width="1" stroke-dasharray="2 1" stroke-dashoffset="0.5"/></svg>
<svg style="position:absolute;left:162px;top:725px;" width="32" height="7" viewBox="0 0 32 7"><rect x="0.5" y="0.5" width="31" height="6" fill="none" stroke="#474747" stroke-width="1" stroke-dasharray="2 1" stroke-dashoffset="0.5"/></svg>
<div class="t" style="left:79px;top:663.76px;font-size:5.6px;color:#2e2a40;">Click to edit Master title style</div>
<div class="t" style="left:79px;top:678.95px;font-size:3.6px;color:#55506a;">Click to edit Master text styles</div>
<div class="t" style="left:79px;top:683.62px;font-size:3.4px;color:#55506a;">• Click to edit Master text styles</div>
<div class="t" style="left:84px;top:688.80px;font-size:2.6px;color:#8a6a70;">• Second level</div>
<div class="t" style="left:88px;top:691.97px;font-size:2.4px;color:#8a7a70;">• Third level</div>
<svg style="position:absolute;left:81.51px;top:694.31px;" width="49.98" height="18.38" viewBox="0 0 49.98 18.38"><rect x="0.50" y="0.50" width="10.55" height="7.40" rx="1.58" fill="#f4f4f4" stroke="#d0d0d0" stroke-width="0.95"/><rect x="13.31" y="0.50" width="10.55" height="7.40" rx="1.58" fill="#f4f4f4" stroke="#d0d0d0" stroke-width="0.95"/><rect x="26.12" y="0.50" width="10.55" height="7.40" rx="1.58" fill="#f4f4f4" stroke="#d0d0d0" stroke-width="0.95"/><rect x="38.93" y="0.50" width="10.55" height="7.40" rx="1.58" fill="#f4f4f4" stroke="#d0d0d0" stroke-width="0.95"/><rect x="0.50" y="10.48" width="10.55" height="7.40" rx="1.58" fill="#f4f4f4" stroke="#d0d0d0" stroke-width="0.95"/><rect x="13.31" y="10.48" width="10.55" height="7.40" rx="1.58" fill="#f4f4f4" stroke="#d0d0d0" stroke-width="0.95"/><rect x="26.12" y="10.48" width="10.55" height="7.40" rx="1.58" fill="#f4f4f4" stroke="#d0d0d0" stroke-width="0.95"/><rect x="38.93" y="10.48" width="10.55" height="7.40" rx="1.58" fill="#f4f4f4" stroke="#d0d0d0" stroke-width="0.95"/><path d="M27.72 3.15 q3.15 -3.15 6.30 0" fill="#7ab8ea" stroke="#5aa0dd" stroke-width="1.05"/><path d="M39.48 1.05 h6.30 l3.15 3.15 h-7.35 z" fill="#8fd49a"/><rect x="15.96" y="3.68" width="5.25" height="3.68" fill="none" stroke="#8cc4ee" stroke-width="0.95"/><path d="M4.20 16.28 l4.20 -4.20 M4.20 12.08 l4.20 4.20" stroke="#5aa0dd" stroke-width="1.05"/><rect x="44.73" y="11.03" width="3.15" height="6.83" fill="#9cc8ee"/><path d="M29.82 9.975000000000001 v8.40 M32.97 9.975000000000001 v8.40 M25.62 14.18 h11.55" stroke="#d0d0d0" stroke-width="0.84"/></svg>
<div class="t" style="left:137px;top:678.95px;font-size:3.6px;color:#55506a;">Click to edit Master text styles</div>
<div class="t" style="left:137px;top:683.62px;font-size:3.4px;color:#55506a;">• Click to edit Master text styles</div>
<div class="t" style="left:142px;top:688.80px;font-size:2.6px;color:#8a6a70;">• Second level</div>
<div class="t" style="left:146px;top:691.97px;font-size:2.4px;color:#8a7a70;">• Third level</div>
<svg style="position:absolute;left:139.51px;top:694.31px;" width="49.98" height="18.38" viewBox="0 0 49.98 18.38"><rect x="0.50" y="0.50" width="10.55" height="7.40" rx="1.58" fill="#f4f4f4" stroke="#d0d0d0" stroke-width="0.95"/><rect x="13.31" y="0.50" width="10.55" height="7.40" rx="1.58" fill="#f4f4f4" stroke="#d0d0d0" stroke-width="0.95"/><rect x="26.12" y="0.50" width="10.55" height="7.40" rx="1.58" fill="#f4f4f4" stroke="#d0d0d0" stroke-width="0.95"/><rect x="38.93" y="0.50" width="10.55" height="7.40" rx="1.58" fill="#f4f4f4" stroke="#d0d0d0" stroke-width="0.95"/><rect x="0.50" y="10.48" width="10.55" height="7.40" rx="1.58" fill="#f4f4f4" stroke="#d0d0d0" stroke-width="0.95"/><rect x="13.31" y="10.48" width="10.55" height="7.40" rx="1.58" fill="#f4f4f4" stroke="#d0d0d0" stroke-width="0.95"/><rect x="26.12" y="10.48" width="10.55" height="7.40" rx="1.58" fill="#f4f4f4" stroke="#d0d0d0" stroke-width="0.95"/><rect x="38.93" y="10.48" width="10.55" height="7.40" rx="1.58" fill="#f4f4f4" stroke="#d0d0d0" stroke-width="0.95"/><path d="M27.72 3.15 q3.15 -3.15 6.30 0" fill="#7ab8ea" stroke="#5aa0dd" stroke-width="1.05"/><path d="M39.48 1.05 h6.30 l3.15 3.15 h-7.35 z" fill="#8fd49a"/><rect x="15.96" y="3.68" width="5.25" height="3.68" fill="none" stroke="#8cc4ee" stroke-width="0.95"/><path d="M4.20 16.28 l4.20 -4.20 M4.20 12.08 l4.20 4.20" stroke="#5aa0dd" stroke-width="1.05"/><rect x="44.73" y="11.03" width="3.15" height="6.83" fill="#9cc8ee"/><path d="M29.82 9.975000000000001 v8.40 M32.97 9.975000000000001 v8.40 M25.62 14.18 h11.55" stroke="#d0d0d0" stroke-width="0.84"/></svg>
<svg style="position:absolute;left:78px;top:755px;" width="116" height="18" viewBox="0 0 116 18"><rect x="0.5" y="0.5" width="115" height="17" fill="none" stroke="#474747" stroke-width="1" stroke-dasharray="2 1" stroke-dashoffset="0.5"/></svg>
<div class="t" style="left:79px;top:761.06px;font-size:5.6px;color:#2e2a40;">Click to edit Master title style</div>
<div style="position:absolute;left:1317px;top:132px;width:14px;height:627px;background:#3d3d3d;border-radius:8px 0 0 8px;"></div>
<svg style="position:absolute;left:1321px;top:137px;" width="10" height="7" viewBox="0 0 10 7"><path d="M5 0 L10 6.5 H0 Z" fill="#c6c6c6"/></svg>
<div style="position:absolute;left:1321px;top:148.8px;width:9px;height:49.5px;background:#c6c6c6;border-radius:4.5px;"></div>
<svg style="position:absolute;left:1320.5px;top:748px;" width="10" height="7" viewBox="0 0 10 7"><path d="M0.5 0.5 H9.5 L5 6.5 Z" fill="#c6c6c6" stroke="#c6c6c6" stroke-width="1" stroke-linejoin="round"/></svg>
<svg style="position:absolute;left:1320.5px;top:762px;" width="10" height="12" viewBox="0 0 10 12"><path d="M5 0.3 L9.6 5.3 L8.2 6.4 L9.6 8 V10.8 H0.4 V8 L1.8 6.4 L0.4 5.3 Z" fill="#c6c6c6"/></svg>
<svg style="position:absolute;left:1320.5px;top:778.5px;" width="10" height="12" viewBox="0 0 10 12"><path d="M5 11.5 L9.6 6.5 L8.2 5.4 L9.6 3.8 V0.5 H0.4 V3.8 L1.8 5.4 L0.4 6.5 Z" fill="#c6c6c6"/></svg>
<div style="position:absolute;left:260.5px;top:178.5px;width:1040.7px;height:585.4px;background:#ffffff;box-shadow:0 0 2px rgba(0,0,0,0.4);"></div>
<svg style="position:absolute;left:332px;top:210px;" width="899" height="115" viewBox="0 0 899 115"><rect x="0.5" y="0.5" width="898" height="114" fill="none" stroke="#6a6a6a" stroke-width="1" stroke-dasharray="2 1" stroke-dashoffset="0.5"/></svg>
<svg style="position:absolute;left:332px;top:334px;" width="899" height="373" viewBox="0 0 899 373"><rect x="0.5" y="0.5" width="898" height="372" fill="none" stroke="#6a6a6a" stroke-width="1" stroke-dasharray="2 1" stroke-dashoffset="0.5"/></svg>
<svg style="position:absolute;left:332px;top:721px;" width="236" height="33" viewBox="0 0 236 33"><rect x="0.5" y="0.5" width="235" height="32" fill="none" stroke="#6a6a6a" stroke-width="1" stroke-dasharray="2 1" stroke-dashoffset="0.5"/></svg>
<svg style="position:absolute;left:605px;top:721px;" width="353" height="33" viewBox="0 0 353 33"><rect x="0.5" y="0.5" width="352" height="32" fill="none" stroke="#6a6a6a" stroke-width="1" stroke-dasharray="2 1" stroke-dashoffset="0.5"/></svg>
<svg style="position:absolute;left:995px;top:721px;" width="236" height="33" viewBox="0 0 236 33"><rect x="0.5" y="0.5" width="235" height="32" fill="none" stroke="#6a6a6a" stroke-width="1" stroke-dasharray="2 1" stroke-dashoffset="0.5"/></svg>
<div class="t" style="left:340px;top:240.66px;font-size:46px;color:#000;letter-spacing:-0.9px;">Click to edit Master title style</div>
<div class="t" style="left:340px;top:339.67px;font-size:28.5px;color:#000;">•</div>
<div class="t" style="left:360px;top:339.67px;font-size:28.5px;color:#000;letter-spacing:0.4px;">Click to edit Master text styles</div>
<div class="t" style="left:379px;top:376.86px;font-size:24.5px;color:#000;">•</div>
<div class="t" style="left:398px;top:376.86px;font-size:24.5px;color:#000;letter-spacing:0.4px;">Second level</div>
<div class="t" style="left:418px;top:410.22px;font-size:21px;color:#000;">•</div>
<div class="t" style="left:437.5px;top:410.22px;font-size:21px;color:#000;letter-spacing:-0.1px;">Third level</div>
<div class="t" style="left:457.5px;top:438.75px;font-size:19.2px;color:#000;">•</div>
<div class="t" style="left:476px;top:438.75px;font-size:19.2px;color:#000;letter-spacing:-0.05px;">Fourth level</div>
<div class="t" style="left:497px;top:465.75px;font-size:19.2px;color:#000;">•</div>
<div class="t" style="left:515px;top:465.75px;font-size:19.2px;color:#000;letter-spacing:0.05px;">Fifth level</div>
<div class="t" style="left:340px;top:730.30px;font-size:13px;color:#767676;">27.04.2024</div>
<div class="t" style="left:581px;width:400px;text-align:center;top:730.30px;font-size:13px;color:#767676;">Footer</div>
<div class="t" style="left:822px;width:400px;text-align:right;top:731.14px;font-size:12px;color:#767676;">‹#›</div>
</body></html>
